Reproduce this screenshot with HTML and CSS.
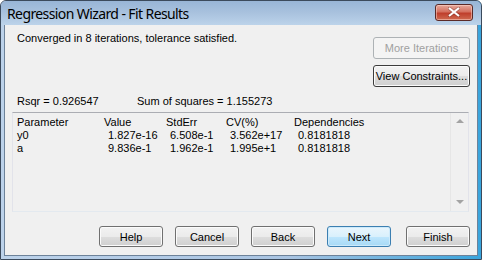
FILE: index.html
```html
<!DOCTYPE html>
<html>
<head>
<meta charset="utf-8">
<link rel="stylesheet" href="styles.css">
</head>
<body>
<div class="window">
  <div class="titlebar">
    <span class="title">Regression Wizard - Fit Results</span>
    <button class="close" aria-label="Close">
      <svg width="12" height="10" viewBox="0 0 12 10"><path d="M1 1 L11 9 M11 1 L1 9" stroke="#5a2a26" stroke-width="3.6" stroke-linecap="square" opacity="0.35"/><path d="M1 1 L11 9 M11 1 L1 9" stroke="#fff" stroke-width="2.2"/></svg>
    </button>
  </div>
  <div class="client">
    <div class="top">
      <div class="msg">Converged in 8 iterations, tolerance satisfied.</div>
      <div class="side">
        <button class="btn wide" disabled>More Iterations</button>
        <button class="btn wide focus">View Constraints...</button>
      </div>
    </div>
    <div class="stats">
      <span class="rsqr">Rsqr = 0.926547</span>
      <span>Sum of squares = 1.155273</span>
    </div>
    <div class="listbox">
      <div class="grid">
        <span>Parameter</span><span>Value</span><span>StdErr</span><span>CV(%)</span><span>Dependencies</span>
        <span>y0</span><span class="n">1.827e-16</span><span class="n">6.508e-1</span><span class="n">3.562e+17</span><span class="n">0.8181818</span>
        <span>a</span><span class="n">9.836e-1</span><span class="n">1.962e-1</span><span class="n">1.995e+1</span><span class="n">0.8181818</span>
      </div>
      <div class="scroll">
        <span class="arrow up"></span>
        <span class="arrow down"></span>
      </div>
    </div>
    <div class="footer">
      <button class="btn">Help</button>
      <button class="btn">Cancel</button>
      <button class="btn">Back</button>
      <button class="btn default">Next</button>
      <button class="btn finish">Finish</button>
    </div>
  </div>
</div>
</body>
</html>
```
FILE: styles.css
```css
html, body {
  margin: 0;
  padding: 0;
  background: #fff;
}
.window {
  width: 482px;
  height: 260px;
  box-sizing: border-box;
  border: 1px solid #3b4a5c;
  border-radius: 6px 6px 0 0;
  background: linear-gradient(to right, #bcd2ea 0%, #a9c4e2 60%, #39a4dc 100%);
  display: flex;
  flex-direction: column;
  overflow: hidden;
}
.titlebar {
  height: 24px;
  flex: none;
  display: flex;
  align-items: center;
  justify-content: space-between;
  padding: 0 8px 0 6px;
  background: linear-gradient(to bottom, #98b5d6 0%, #a9c2de 50%, #bcd3ea 100%);
}
.title {
  font-family: "Noto Sans", sans-serif;
  font-size: 14px;
  letter-spacing: -0.6px;
  color: #000;
  margin-top: 1px;
}
.close {
  width: 38px;
  height: 17px;
  margin-top: -2px;
  padding: 0;
  border: 1px solid #5b2a27;
  border-radius: 3px;
  background: linear-gradient(to bottom, #e7a99c 0%, #d4705f 45%, #bf3e2c 55%, #cf6a51 100%);
  box-shadow: inset 0 0 0 1px rgba(255, 220, 210, 0.5);
  display: flex;
  align-items: center;
  justify-content: center;
}
.client {
  flex: 1;
  margin: 0 3px 3px 3px;
  border: 1px solid #6d8299;
  border-top: 0;
  background: #f0f0f0;
  padding: 0 7px 0 7px;
  font-family: "Liberation Sans", Arial, sans-serif;
  font-size: 11px;
  line-height: 13px;
  color: #000;
  display: flex;
  flex-direction: column;
}
.top {
  display: flex;
  justify-content: space-between;
  padding-top: 7px;
}
.msg {
  padding-left: 5px;
}
.side {
  margin-top: 5px;
  display: flex;
  flex-direction: column;
  gap: 6px;
}
.btn {
  font-family: "Liberation Sans", Arial, sans-serif;
  font-size: 11px;
  color: #000;
  height: 22px;
  width: 64px;
  padding: 0;
  border: 1px solid #707070;
  border-radius: 3px;
  background: linear-gradient(to bottom, #f2f2f2 0%, #ebebeb 50%, #dddddd 51%, #cfcfcf 100%);
  box-shadow: inset 0 0 0 1px #fbfbfb;
}
.btn.wide {
  width: 97px;
}
.btn:disabled {
  color: #a0a0a0;
  border-color: #adb2b5;
  background: #f4f4f4;
  box-shadow: none;
}
.btn.focus {
  border-color: #3c3c3c;
}
.btn.default {
  border-color: #3c7fb1;
  background: linear-gradient(to bottom, #eaf6fd 0%, #d9f0fc 50%, #bee6fd 51%, #a7d9f5 100%);
  box-shadow: inset 0 0 0 1px #cdeafb;
}
.stats {
  margin-top: 8px;
  padding-left: 5px;
  display: flex;
}
.rsqr {
  width: 120px;
}
.listbox {
  margin: 4px 1px 0 0;
  height: 100px;
  box-sizing: border-box;
  border: 1px solid #828790;
  border-color: #abadb3 #e2e3ea #e3e9ef #e2e3ea;
  background: #f0f0f0;
  display: flex;
  justify-content: space-between;
}
.grid {
  display: grid;
  grid-template-columns: 87px 62px 60px 68px 80px;
  grid-auto-rows: 13px;
  padding: 3px 0 0 4px;
  align-content: start;
}
.n {
  padding-left: 4px;
}
.scroll {
  width: 17px;
  border-left: 1px solid #e6e6e6;
  display: flex;
  flex-direction: column;
  justify-content: space-between;
  align-items: center;
  padding: 6px 0 7px;
}
.arrow {
  width: 0;
  height: 0;
  border-left: 4px solid transparent;
  border-right: 4px solid transparent;
}
.arrow.up {
  border-bottom: 4px solid #a3a3a3;
}
.arrow.down {
  border-top: 4px solid #a3a3a3;
}
.footer {
  margin-top: 14px;
  display: flex;
  justify-content: flex-end;
  gap: 12px;
}
.footer .btn {
  height: 21px;
}
.footer .finish {
  margin-left: 3px;
}
```
